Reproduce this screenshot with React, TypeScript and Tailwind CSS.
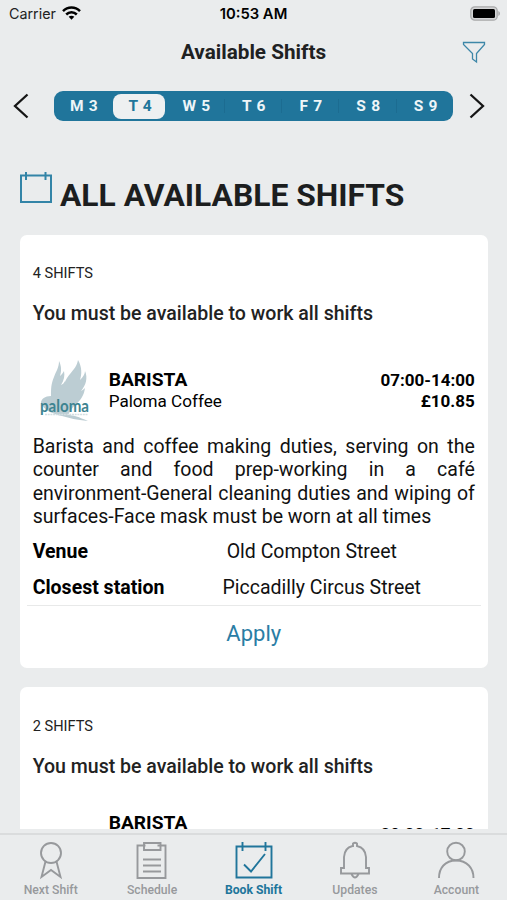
import { ReactNode } from "react";

const days = ["M 3", "T 4", "W 5", "T 6", "F 7", "S 8", "S 9"];

function StatusBar() {
  return (
    <div className="relative h-7 shrink-0 flex items-center justify-between pl-[9px] pr-[6px] text-black font-['Inter',sans-serif]">
      <div className="flex items-center gap-[6px]">
        <span className="text-[14.300px] leading-7 text-[#222]">Carrier</span>
        <svg className="-mt-[2px]" width="19" height="14" viewBox="0 0 19 14" fill="none" stroke="#000" strokeWidth="2.5">
          <path d="M1 5.2C5.8.4 13.2.4 18 5.2" />
          <path d="M4.2 8.5c3-3 7.600-3 10.600 0" />
          <path d="M9.500 13.700 6.700 10.800c1.600-1.500 4-1.500 5.600 0z" fill="#000" stroke="none" />
        </svg>
      </div>
      <span className="absolute inset-x-0 text-center text-[14.800px] leading-7 font-semibold">10:53 AM</span>
      <svg className="-mt-[2px]" width="31" height="15" viewBox="0 0 31 15">
        <rect x=".8" y=".8" width="26.400" height="13.400" rx="4" fill="#d4d5d6" stroke="#a9aaab" strokeWidth="1.300" />
        <rect x="3" y="3" width="22" height="9" rx="1.500" fill="#000" />
        <path d="M28.300 5v5c2.200-.8 2.200-4.200 0-5z" fill="#a9aaab" />
      </svg>
    </div>
  );
}

function PalomaLogo() {
  return (
    <svg width="56" height="66" viewBox="0 0 56 66" className="shrink-0">
      <path
        d="M1 43c0-4 4-7 10-7 0-7 0-12 3-19 2-6 5-9 5-16 2 4 3 9 1 15 2-2 3-3 4-5 1 5 0 9-3 14 2-1 3-2 4-4 0 4-1 7-2 10 1-9 3-12 7-17C34 9 37 6 38 0c4 7 4 14 2 20 3-3 5-6 5-9 3 7 1 14-4 20 2-1 3-2 4-3-1 8-5 13-10 17-3 3-5 6-7 10 5 0 11 2 20 6-12-1-18-3-26-5C12 54 4 50 1 43z"
        fill="#bccdd3"
      />
      <text x="0" y="52" textLength="49" lengthAdjust="spacingAndGlyphs" fontFamily="Lato, sans-serif" fontSize="17" fontWeight="700" fill="#3e8491">
        paloma
      </text>
      <path d="M5 54.500h43" stroke="#d4dfe2" strokeWidth="1.300" strokeDasharray="2 .7" />
    </svg>
  );
}

function CardHeading({ count }: { count: number }) {
  return (
    <div className="pt-[26px] text-[#222]">
      <p className="text-[14.600px] leading-6">{count} SHIFTS</p>
      <p className="mt-[17px] text-[19.550px] leading-6 font-medium">You must be available to work all shifts</p>
    </div>
  );
}

function Tab({ label, active, children }: { label: string; active?: boolean; children: ReactNode }) {
  return (
    <div className={`flex-1 flex flex-col items-center pt-[6px] ${active ? "text-[#20759b]" : "text-[#97999c]"}`}>
      <svg width="42" height="40" viewBox="0 0 42 40" fill="none" stroke="currentColor" strokeWidth="1.900">
        {children}
      </svg>
      <span className={`mt-px text-[12.200px] leading-4 ${active ? "font-bold" : "font-medium"}`}>{label}</span>
    </div>
  );
}

export default function App() {
  return (
    <div className="w-[507px] h-[900px] overflow-hidden flex flex-col bg-[#eaeced] font-['Roboto',sans-serif]">
      <StatusBar />

      <header className="relative h-12 shrink-0 flex items-center justify-center">
        <h1 className="pt-[2px] text-[20.700px] font-bold text-[#202122]">Available Shifts</h1>
        <svg className="absolute right-[21px] top-[12px]" width="24" height="24" viewBox="0 0 24 24" fill="none" stroke="#3d87a8" strokeWidth="1.300">
          <path d="M1.500 2.500h21v2l-8 9v8.500l-4-3v-5.500l-9-9z" />
        </svg>
      </header>

      <div className="shrink-0 mt-[15px] flex items-center">
        <svg className="ml-[13px] mr-[25px]" width="16" height="26" viewBox="0 0 16 26" fill="none" stroke="#151515" strokeWidth="2.300">
          <path d="M14.500 1.500 2 13l12.500 11.500" />
        </svg>
        <div className="w-[399px] h-[30px] rounded-[9px] bg-[#20759b] pl-px flex items-center">
          {days.map((day, i) => (
            <div
              key={i}
              className={`flex-1 h-[14px] flex items-center justify-center ${i > 2 ? "border-l border-[#1c6c91]" : ""}`}
            >
              <span
                className={
                  i === 1
                    ? "w-[52px] h-[25px] shrink-0 rounded-[8px] bg-[#eef0f1] text-[#20759b] text-center pl-[2px] text-[15.500px] leading-[24px] font-bold tracking-[0.7px]"
                    : "pl-[2px] text-[#eef5f8] text-[15.500px] leading-[24px] font-bold tracking-[0.7px]"
                }
              >
                {day}
              </span>
            </div>
          ))}
        </div>
        <svg className="ml-[16px]" width="16" height="26" viewBox="0 0 16 26" fill="none" stroke="#151515" strokeWidth="2.300">
          <path d="M1.500 1.500 14 13 1.500 24.500" />
        </svg>
      </div>

      <main className="mt-[47px] h-[661px] shrink-0 overflow-hidden px-[20px]">
        <div className="h-[67px] flex items-start">
          <svg className="mt-[4px] shrink-0" width="32" height="32" viewBox="0 0 32 32" fill="none" stroke="#3384a7" strokeWidth="2">
            <path d="M1 3.500h30V30H1zM6 0v8M25.500 0v8" />
          </svg>
          <h2 className="ml-[8px] mt-[7px] text-[31.800px] leading-10 font-bold text-[#1c1e1f] whitespace-nowrap">ALL AVAILABLE SHIFTS</h2>
        </div>

        <section className="w-[467.500px] h-[433px] rounded-[7px] bg-white px-[12.700px]">
          <CardHeading count={4} />
          <div className="mt-[34px] flex h-[66px] text-black">
            <div className="ml-[7px] w-[69px]">
              <PalomaLogo />
            </div>
            <div className="pt-[9px] flex-1">
              <p className="text-[19.200px] leading-[22px] font-bold">BARISTA</p>
              <p className="text-[17.100px] leading-[21px]">Paloma Coffee</p>
            </div>
            <div className="pt-[10px] text-right text-[17px] leading-[21px] font-bold">
              <p>07:00-14:00</p>
              <p>£10.85</p>
            </div>
          </div>
          <p className="mt-[9px] text-[19.500px] leading-[23.300px] text-[#111] text-justify">
            Barista and coffee making duties, serving on the counter and food prep-working in a café environment-General
            cleaning duties and wiping of surfaces-Face mask must be worn at all times
          </p>
          <div className="mt-[12px] flex h-6 items-center text-[19.500px] leading-6">
            <span className="w-[112px] shrink-0 font-bold text-black">Venue</span>
            <span className="flex-1 text-center pl-[4px] text-[#111]">Old Compton Street</span>
          </div>
          <div className="mt-[12px] flex h-6 items-center text-[19.500px] leading-6">
            <span className="w-[132px] shrink-0 font-bold text-black whitespace-nowrap">Closest station</span>
            <span className="flex-1 text-center pl-[4px] text-[#111]">Piccadilly Circus Street</span>
          </div>
          <div className="-mx-[6px] mt-[5px] border-t border-[#e8e9e9] pt-[14px] text-center text-[22px] leading-[28px] text-[#2a7da5]">Apply</div>
        </section>

        <section className="mt-[19px] w-[467.500px] h-[433px] rounded-[7px] bg-white px-[12.700px] pt-px">
          <CardHeading count={2} />
          <div className="mt-[33px] flex text-black">
            <p className="ml-[76px] flex-1 text-[19.200px] leading-[22px] font-bold">BARISTA</p>
            <p className="pt-[12px] text-[17px] leading-[21px] font-bold">09:00-17:00</p>
          </div>
        </section>
      </main>

      <nav className="mt-[4px] flex-1 border-t-2 border-[#dadcdd] flex">
        <Tab label="Next Shift">
          <circle cx="21" cy="12" r="10" />
          <path d="M15.500 20.500 11.500 36l9.500-7 9.500 7-4-15.500" />
        </Tab>
        <Tab label="Schedule">
          <path d="M14.500 4.500h-8V37h28V4.500h-8" />
          <path d="M13 2h16.500v7H13zM12 18.500h18M12 24.500h18M12 30.500h18" />
        </Tab>
        <Tab label="Book Shift" active>
          <path d="M3.500 5.500h35v31h-35zM9.500 1v9M32.500 1v9M11 23.500l7 7L32 13" />
        </Tab>
        <Tab label="Updates">
          <path d="M19 5V2.500q2-1.500 4 0V5q8.500 2 9 11v11h3v5.500h-28V27h3V16q.500-9 8.500-11zM17.500 33q3.500 7 7 0" />
        </Tab>
        <Tab label="Account">
          <circle cx="21" cy="10.500" r="8.800" />
          <path d="M4 37c0-10 6-17.500 17-17.500S38.500 27 38.500 37" />
        </Tab>
      </nav>
    </div>
  );
}
